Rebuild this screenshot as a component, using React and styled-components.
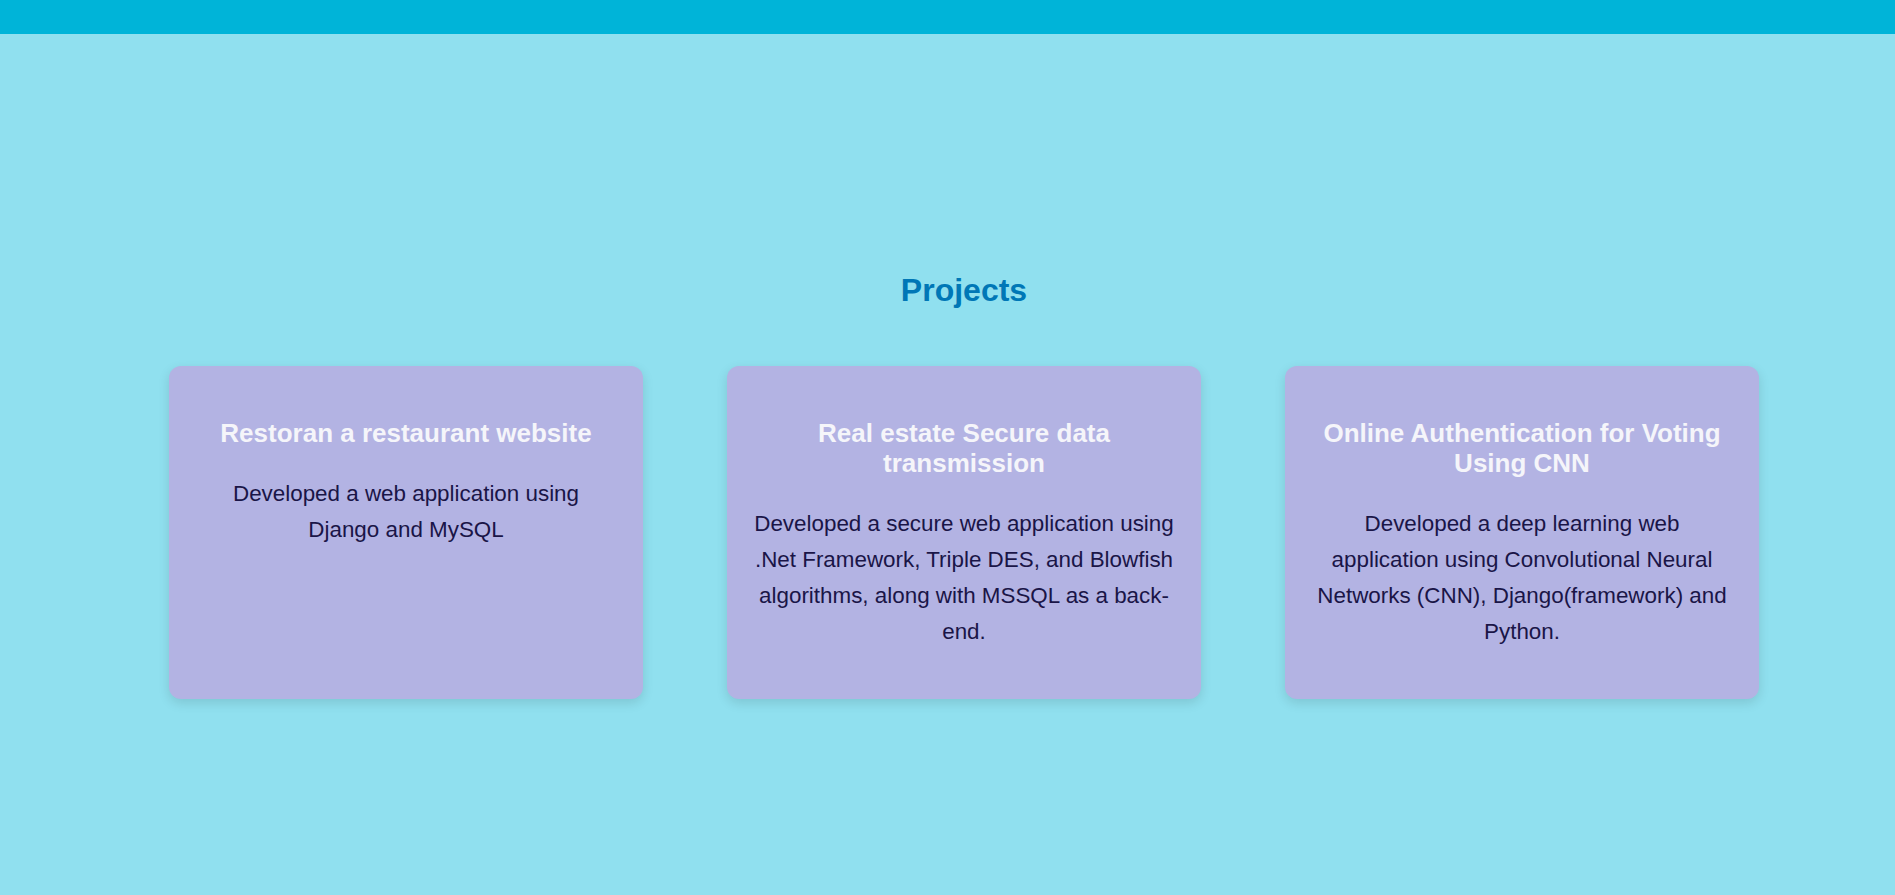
import React from "react";
import styled, { createGlobalStyle } from "styled-components";

const GlobalStyle = createGlobalStyle`
  body {
    margin: 0;
    background-color: #90e0ef;
    font-family: "Liberation Sans", Arial, sans-serif;
  }
`;

const TopBar = styled.header`
  height: 34px;
  background-color: #00b4d8;
`;

const Section = styled.section`
  min-height: 861px;
  padding: 238px 136px 0 169px;
  box-sizing: border-box;
`;

const Heading = styled.h2`
  margin: 0 0 57px;
  text-align: center;
  font-size: 32px;
  font-weight: 700;
  color: #0077b6;
`;

const CardGrid = styled.div`
  display: grid;
  grid-template-columns: repeat(3, 474px);
  column-gap: 84px;
`;

const Card = styled.div`
  background-color: #b3b3e3;
  border-radius: 12px;
  padding: 52px 26px 50px;
  box-shadow: 0 4px 12px rgba(0, 0, 0, 0.12);
  text-align: center;
`;

const CardTitle = styled.h3`
  margin: 0 0 28px;
  font-size: 26px;
  line-height: 30px;
  font-weight: 700;
  color: #f5f5fa;
`;

const CardText = styled.p`
  margin: 0;
  font-size: 22.4px;
  line-height: 35.84px;
  color: #1a1547;
`;

const projects = [
  {
    title: "Restoran a restaurant website",
    text: "Developed a web application using Django and MySQL",
  },
  {
    title: "Real estate Secure data transmission",
    text: "Developed a secure web application using .Net Framework, Triple DES, and Blowfish algorithms, along with MSSQL as a back-end.",
  },
  {
    title: "Online Authentication for Voting Using CNN",
    text: "Developed a deep learning web application using Convolutional Neural Networks (CNN), Django(framework) and Python.",
  },
];

export default function App() {
  return (
    <>
      <GlobalStyle />
      <TopBar />
      <Section>
        <Heading>Projects</Heading>
        <CardGrid>
          {projects.map((p) => (
            <Card key={p.title}>
              <CardTitle>{p.title}</CardTitle>
              <CardText>{p.text}</CardText>
            </Card>
          ))}
        </CardGrid>
      </Section>
    </>
  );
}
